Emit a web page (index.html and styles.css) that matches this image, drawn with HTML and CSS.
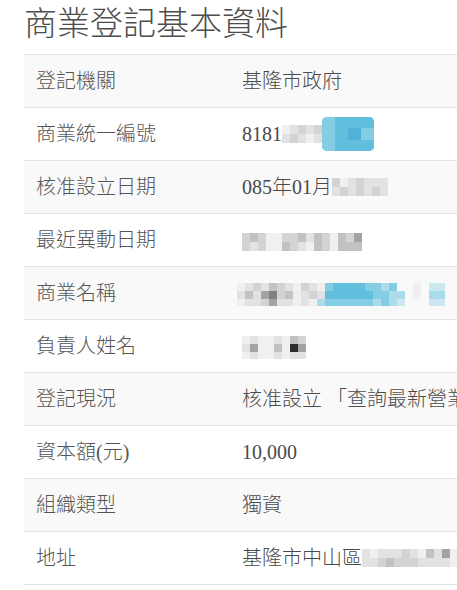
FILE: index.html
```html
<!DOCTYPE html>
<html lang="zh-Hant">
<head>
<meta charset="utf-8">
<title>商業登記基本資料</title>
<link rel="stylesheet" href="styles.css">
</head>
<body>
<div class="page">
  <h2 class="title">商業登記基本資料</h2>
  <table class="info">
    <colgroup>
      <col class="col-label">
      <col class="col-value">
    </colgroup>
    <tbody>
      <tr><th>登記機關</th><td>基隆市政府</td></tr>
      <tr><th>商業統一編號</th><td><span class="val">8181<span class="mosaic">
        <i class="g0"></i><i class="g1"></i><i class="g1"></i><i class="g2"></i><i class="g2"></i><i class="g1"></i><i class="g1"></i><i class="g0"></i><i class="g2"></i><i class="g1"></i></span><span class="mosaic badge">
        <i class="b2"></i><i class="b2"></i><i class="b2"></i><i class="b1"></i><i class="b1"></i><i class="b1"></i><i class="b1"></i><i class="b0"></i><i class="b1"></i><i class="b1"></i><i class="b2"></i><i class="b1"></i></span></span></td></tr>
      <tr><th>核准設立日期</th><td><span class="val">085年01月<span class="mosaic">
        <i class="g2"></i><i class="g1"></i><i class="g0"></i><i class="g2"></i><i class="g1"></i><i class="g1"></i><i class="g2"></i><i class="g2"></i><i class="g1"></i><i class="g1"></i><i class="g1"></i><i class="g2"></i><i class="g1"></i><i class="g1"></i></span></span></td></tr>
      <tr><th>最近異動日期</th><td><span class="mosaic">
        <i class="g2"></i><i class="g2"></i><i class="g3"></i><i class="g1"></i><i class="g2"></i><i class="g2"></i><i class="g0"></i><i class="g0"></i><i class="g0"></i><i class="g0"></i><i class="g2"></i><i class="g3"></i><i class="g2"></i><i class="g2"></i><i class="g3"></i><i class="g1"></i><i class="g1"></i><i class="g0"></i><i class="g3"></i><i class="g3"></i><i class="g2"></i><i class="g2"></i><i class="g0"></i><i class="g0"></i><i class="g3"></i><i class="g3"></i><i class="g2"></i><i class="g3"></i><i class="g4"></i><i class="g3"></i></span></td></tr>
      <tr><th>商業名稱</th><td class="shift"><span class="mosaic tall">
        <i class="g0"></i><i class="g1"></i><i class="g0"></i>
        <i class="g1"></i><i class="g3"></i><i class="g1"></i>
        <i class="g2"></i><i class="g1"></i><i class="g1"></i>
        <i class="g1"></i><i class="g4"></i><i class="g2"></i>
        <i class="g3"></i><i class="g5"></i><i class="g4"></i>
        <i class="g2"></i><i class="g2"></i><i class="g1"></i>
        <i class="g1"></i><i class="g3"></i><i class="g1"></i>
        <i class="g0"></i><i class="g0"></i><i class="g0"></i>
        <i class="g2"></i><i class="g1"></i><i class="g1"></i>
        <i class="g1"></i><i class="g2"></i><i class="g0"></i>
        <i class="g0"></i><i class="g1"></i><i class="b3"></i>
        <i class="b2"></i><i class="b1"></i><i class="b2"></i>
        <i class="b1"></i><i class="b1"></i><i class="b2"></i>
        <i class="b1"></i><i class="b1"></i><i class="b2"></i>
        <i class="b1"></i><i class="b1"></i><i class="b2"></i>
        <i class="b1"></i><i class="b1"></i><i class="b2"></i>
        <i class="b2"></i><i class="b1"></i><i class="b2"></i>
        <i class="b2"></i><i class="b2"></i><i class="b3"></i>
        <i class="b3"></i><i class="b2"></i><i class="b2"></i>
        <i class="b2"></i><i class="b3"></i><i class="b3"></i>
        <i class="w"></i><i class="b3"></i><i class="b4"></i>
        <i class="w"></i><i class="w"></i><i class="w"></i>
        <i class="g0"></i><i class="g0"></i><i class="w"></i>
        <i class="w"></i><i class="w"></i><i class="w"></i>
        <i class="b4"></i><i class="b3"></i><i class="b4"></i>
        <i class="b4"></i><i class="b3"></i><i class="b4"></i>
      </span></td></tr>
      <tr><th>負責人姓名</th><td><span class="mosaic tall">
        <i class="g0"></i><i class="g1"></i><i class="g0"></i>
        <i class="g1"></i><i class="g4"></i><i class="g1"></i>
        <i class="g0"></i><i class="g0"></i><i class="g0"></i>
        <i class="g0"></i><i class="g0"></i><i class="g0"></i>
        <i class="g1"></i><i class="g3"></i><i class="g1"></i>
        <i class="g0"></i><i class="g0"></i><i class="g0"></i>
        <i class="g3"></i><i class="g6"></i><i class="g1"></i>
        <i class="g2"></i><i class="g4"></i><i class="g1"></i>
      </span></td></tr>
      <tr><th>登記現況</th><td>核准設立 「查詢最新營業狀況」</td></tr>
      <tr><th>資本額(元)</th><td>10,000</td></tr>
      <tr><th>組織類型</th><td>獨資</td></tr>
      <tr><th>地址</th><td><span class="val">基隆市中山區<span class="mosaic">
        <i class="g1"></i><i class="g1"></i><i class="g0"></i><i class="g1"></i><i class="g1"></i><i class="g2"></i><i class="g1"></i><i class="g3"></i><i class="g1"></i><i class="g2"></i><i class="g2"></i><i class="g2"></i><i class="g1"></i><i class="g2"></i><i class="g0"></i><i class="g1"></i><i class="g3"></i><i class="g1"></i><i class="g1"></i><i class="g1"></i><i class="g4"></i><i class="g1"></i><i class="g0"></i><i class="g0"></i></span></span></td></tr>
    </tbody>
  </table>
</div>
</body>
</html>
```

FILE: styles.css
```css
html, body {
  margin: 0;
  padding: 0;
  background: #ffffff;
  overflow: hidden;
}

body {
  font-family: "Liberation Serif", "Noto Sans CJK TC", serif;
  color: #4a4a4a;
}

.page {
  padding: 6px 0 0 24px;
}

.title {
  margin: 0 0 12px 0;
  font-size: 33px;
  line-height: 36px;
  font-weight: 300;
  color: #4d4d4d;
  white-space: nowrap;
}

.info {
  width: 640px;
  table-layout: fixed;
  border-collapse: collapse;
  border-spacing: 0;
  font-size: 20px;
  line-height: 24px;
  font-weight: 300;
}

.col-label {
  width: 206px;
}

.info th,
.info td {
  height: 28px;
  padding: 12px;
  border-top: 1px solid #e3e3e3;
  text-align: left;
  vertical-align: middle;
  white-space: nowrap;
  overflow: hidden;
  font-weight: 300;
}

.info tr:last-child th,
.info tr:last-child td {
  border-bottom: 1px solid #e3e3e3;
}

.info th {
  color: #555555;
}

.info td {
  color: #4a4a4a;
}

.info tbody tr:nth-child(odd) {
  background: #f9f9f9;
}

.info td.shift {
  padding-left: 7px;
}

.val {
  display: inline-flex;
  align-items: center;
}

.mosaic {
  display: inline-grid;
  grid-template-rows: 9px 9px;
  grid-auto-flow: column;
  grid-auto-columns: 8px;
  vertical-align: middle;
}

.mosaic.tall {
  grid-template-rows: 8px 8px 7px;
}

.mosaic i {
  display: block;
}

.mosaic.badge {
  grid-template-rows: 11px 12px 11px;
  grid-auto-columns: 13px;
  border-radius: 5px;
  overflow: hidden;
  background: #6cc3df;
  margin: -3px 0;
}

.w  { background: transparent; }
.g0 { background: #f0f0f0; }
.g1 { background: #e2e2e2; }
.g2 { background: #d3d3d3; }
.g3 { background: #c2c2c2; }
.g4 { background: #a3a3a3; }
.g5 { background: #808080; }
.g6 { background: #2c2c2c; }

.b0 { background: #4fb2d6; }
.b1 { background: #62bedd; }
.b2 { background: #84cde5; }
.b3 { background: #aadcec; }
.b4 { background: #cbe7f0; }
```
